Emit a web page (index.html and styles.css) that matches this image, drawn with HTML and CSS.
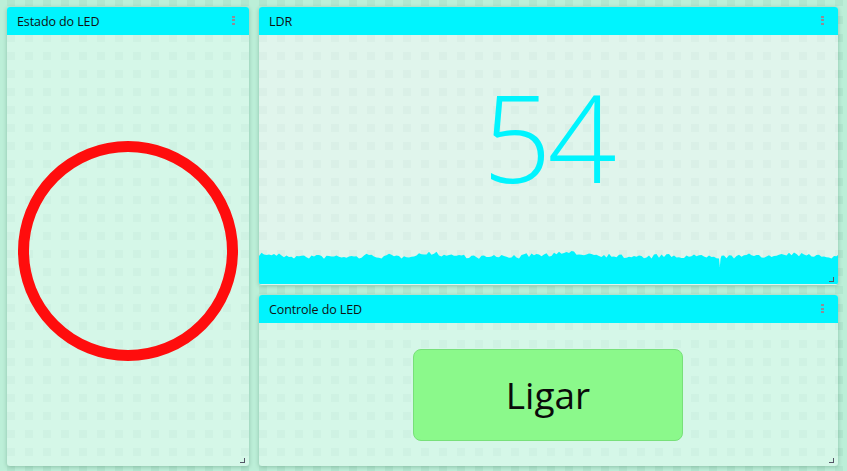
FILE: index.html
```html
<!DOCTYPE html>
<html lang="pt">
<head>
<meta charset="utf-8">
<title>Dashboard</title>
<link rel="stylesheet" href="styles.css">
</head>
<body>
<div class="grid">
  <section class="card card-led">
    <header class="card-head"><span class="card-title">Estado do LED</span><span class="dots"></span></header>
    <div class="card-body body-center">
      <svg class="led" width="222" height="222" viewBox="0 0 222 222">
        <circle cx="111" cy="111" r="104.5" fill="none" stroke="#ff0d0d" stroke-width="11"/>
      </svg>
      <span class="resize"></span>
    </div>
  </section>
  <section class="card card-ldr">
    <header class="card-head"><span class="card-title">LDR</span><span class="dots"></span></header>
    <div class="card-body ldr-body">
      <div class="value-wrap"><span class="value">54</span></div>
      <svg class="chart" id="chart" viewBox="0 0 579 36" preserveAspectRatio="none" width="579" height="36"><path id="chartPath" fill="#00f4fe" d=""/></svg>
      <span class="resize"></span>
    </div>
  </section>
  <section class="card card-ctrl">
    <header class="card-head"><span class="card-title">Controle do LED</span><span class="dots"></span></header>
    <div class="card-body body-center">
      <button class="btn">Ligar</button>
      <span class="resize"></span>
    </div>
  </section>
</div>
<script src="script.js"></script>
</body>
</html>
```
FILE: styles.css
```css
html, body {
  margin: 0;
  height: 100%;
}
body {
  box-sizing: border-box;
  padding: 7px 9px 5px 7px;
  background-color: #bcefd8;
  background-image: conic-gradient(from 270deg at 8px 8px, rgba(0, 70, 40, 0.05) 90deg, transparent 0);
  background-size: 18px 18px;
  background-position: 7px 16px;
  background-attachment: fixed;
  font-family: "Open Sans", "Noto Sans", sans-serif;
  overflow: hidden;
}
.grid {
  display: grid;
  grid-template-columns: 242px 1fr;
  grid-template-rows: 278px 1fr;
  gap: 10px;
  height: 100%;
}
.card {
  display: flex;
  flex-direction: column;
  border-radius: 3px;
  overflow: hidden;
  box-shadow: 0 1px 4px rgba(0, 60, 30, 0.25);
  background: #d5f7e8;
}
.card-led { grid-row: 1 / 3; grid-column: 1; }
.card-ldr { grid-row: 1; grid-column: 2; background: #e0f5ec; }
.card-ctrl { grid-row: 2; grid-column: 2; }
.card-head {
  height: 28px;
  flex: none;
  background: #00f4fe;
  display: flex;
  align-items: center;
  justify-content: space-between;
  padding: 0 14px 0 10px;
}
.card-title {
  font-size: 12.5px;
  color: #111;
  letter-spacing: -0.1px;
}
.dots {
  width: 3px;
  height: 9px;
  background: linear-gradient(#8e8e98 0 2px, transparent 2px 3.5px, #8e8e98 3.5px 5.5px, transparent 5.5px 7px, #8e8e98 7px 9px);
  margin-top: -2px;
}
.card-body {
  flex: 1;
  position: relative;
  background-image: conic-gradient(from 270deg at 8px 8px, rgba(0, 70, 40, 0.028) 90deg, transparent 0);
  background-size: 18px 18px;
  background-position: 7px 16px;
  background-attachment: fixed;
}
.body-center {
  display: flex;
  align-items: center;
  justify-content: center;
}
.led { display: block; }
.ldr-body {
  display: flex;
  flex-direction: column;
}
.value-wrap {
  flex: 1;
  display: flex;
  align-items: center;
  justify-content: center;
  padding-bottom: 10px;
}
.value {
  font-family: "Open Sans", "Noto Sans", sans-serif;
  font-weight: 300;
  font-size: 121px;
  line-height: 1;
  color: #00f4fe;
  letter-spacing: -4px;
  margin-left: -2px;
}
.chart {
  display: block;
  flex: none;
  width: 100%;
  height: 36px;
  margin-bottom: 1px;
}
.btn {
  width: 270px;
  height: 92px;
  border: 1px solid #78e07a;
  border-radius: 8px;
  background: #8bf98b;
  font-family: "Open Sans", "Noto Sans", sans-serif;
  font-size: 37px;
  color: #0a0a0a;
  padding: 0;
  margin-top: 0;
  margin-left: -1px;
}
.resize {
  position: absolute;
  right: 4px;
  bottom: 3px;
  width: 5px;
  height: 5px;
  border-right: 1px solid #556;
  border-bottom: 1px solid #556;
  box-sizing: border-box;
}
```
FILE: script.js
```js
(function () {
  var seed = 7;
  function rnd() {
    seed = (seed * 16807) % 2147483647;
    return (seed - 1) / 2147483646;
  }
  var w = 579, h = 36;
  var d = "M0 " + h + " L0 9";
  var base = 5;
  for (var x = 0; x <= w; x += 2.5) {
    base += (rnd() - 0.5) * 1.4;
    if (base < 3) base = 3;
    if (base > 7) base = 7;
    var y = base + rnd() * 4;
    if (x === 460) { d += " L" + x + " " + y.toFixed(1) + " L" + (x + 0.8) + " 19 L" + (x + 1.6) + " " + y.toFixed(1); continue; }
    d += " L" + x + " " + y.toFixed(1);
  }
  d += " L" + w + " 7 L" + w + " " + h + " Z";
  document.getElementById("chartPath").setAttribute("d", d);
})();
```
